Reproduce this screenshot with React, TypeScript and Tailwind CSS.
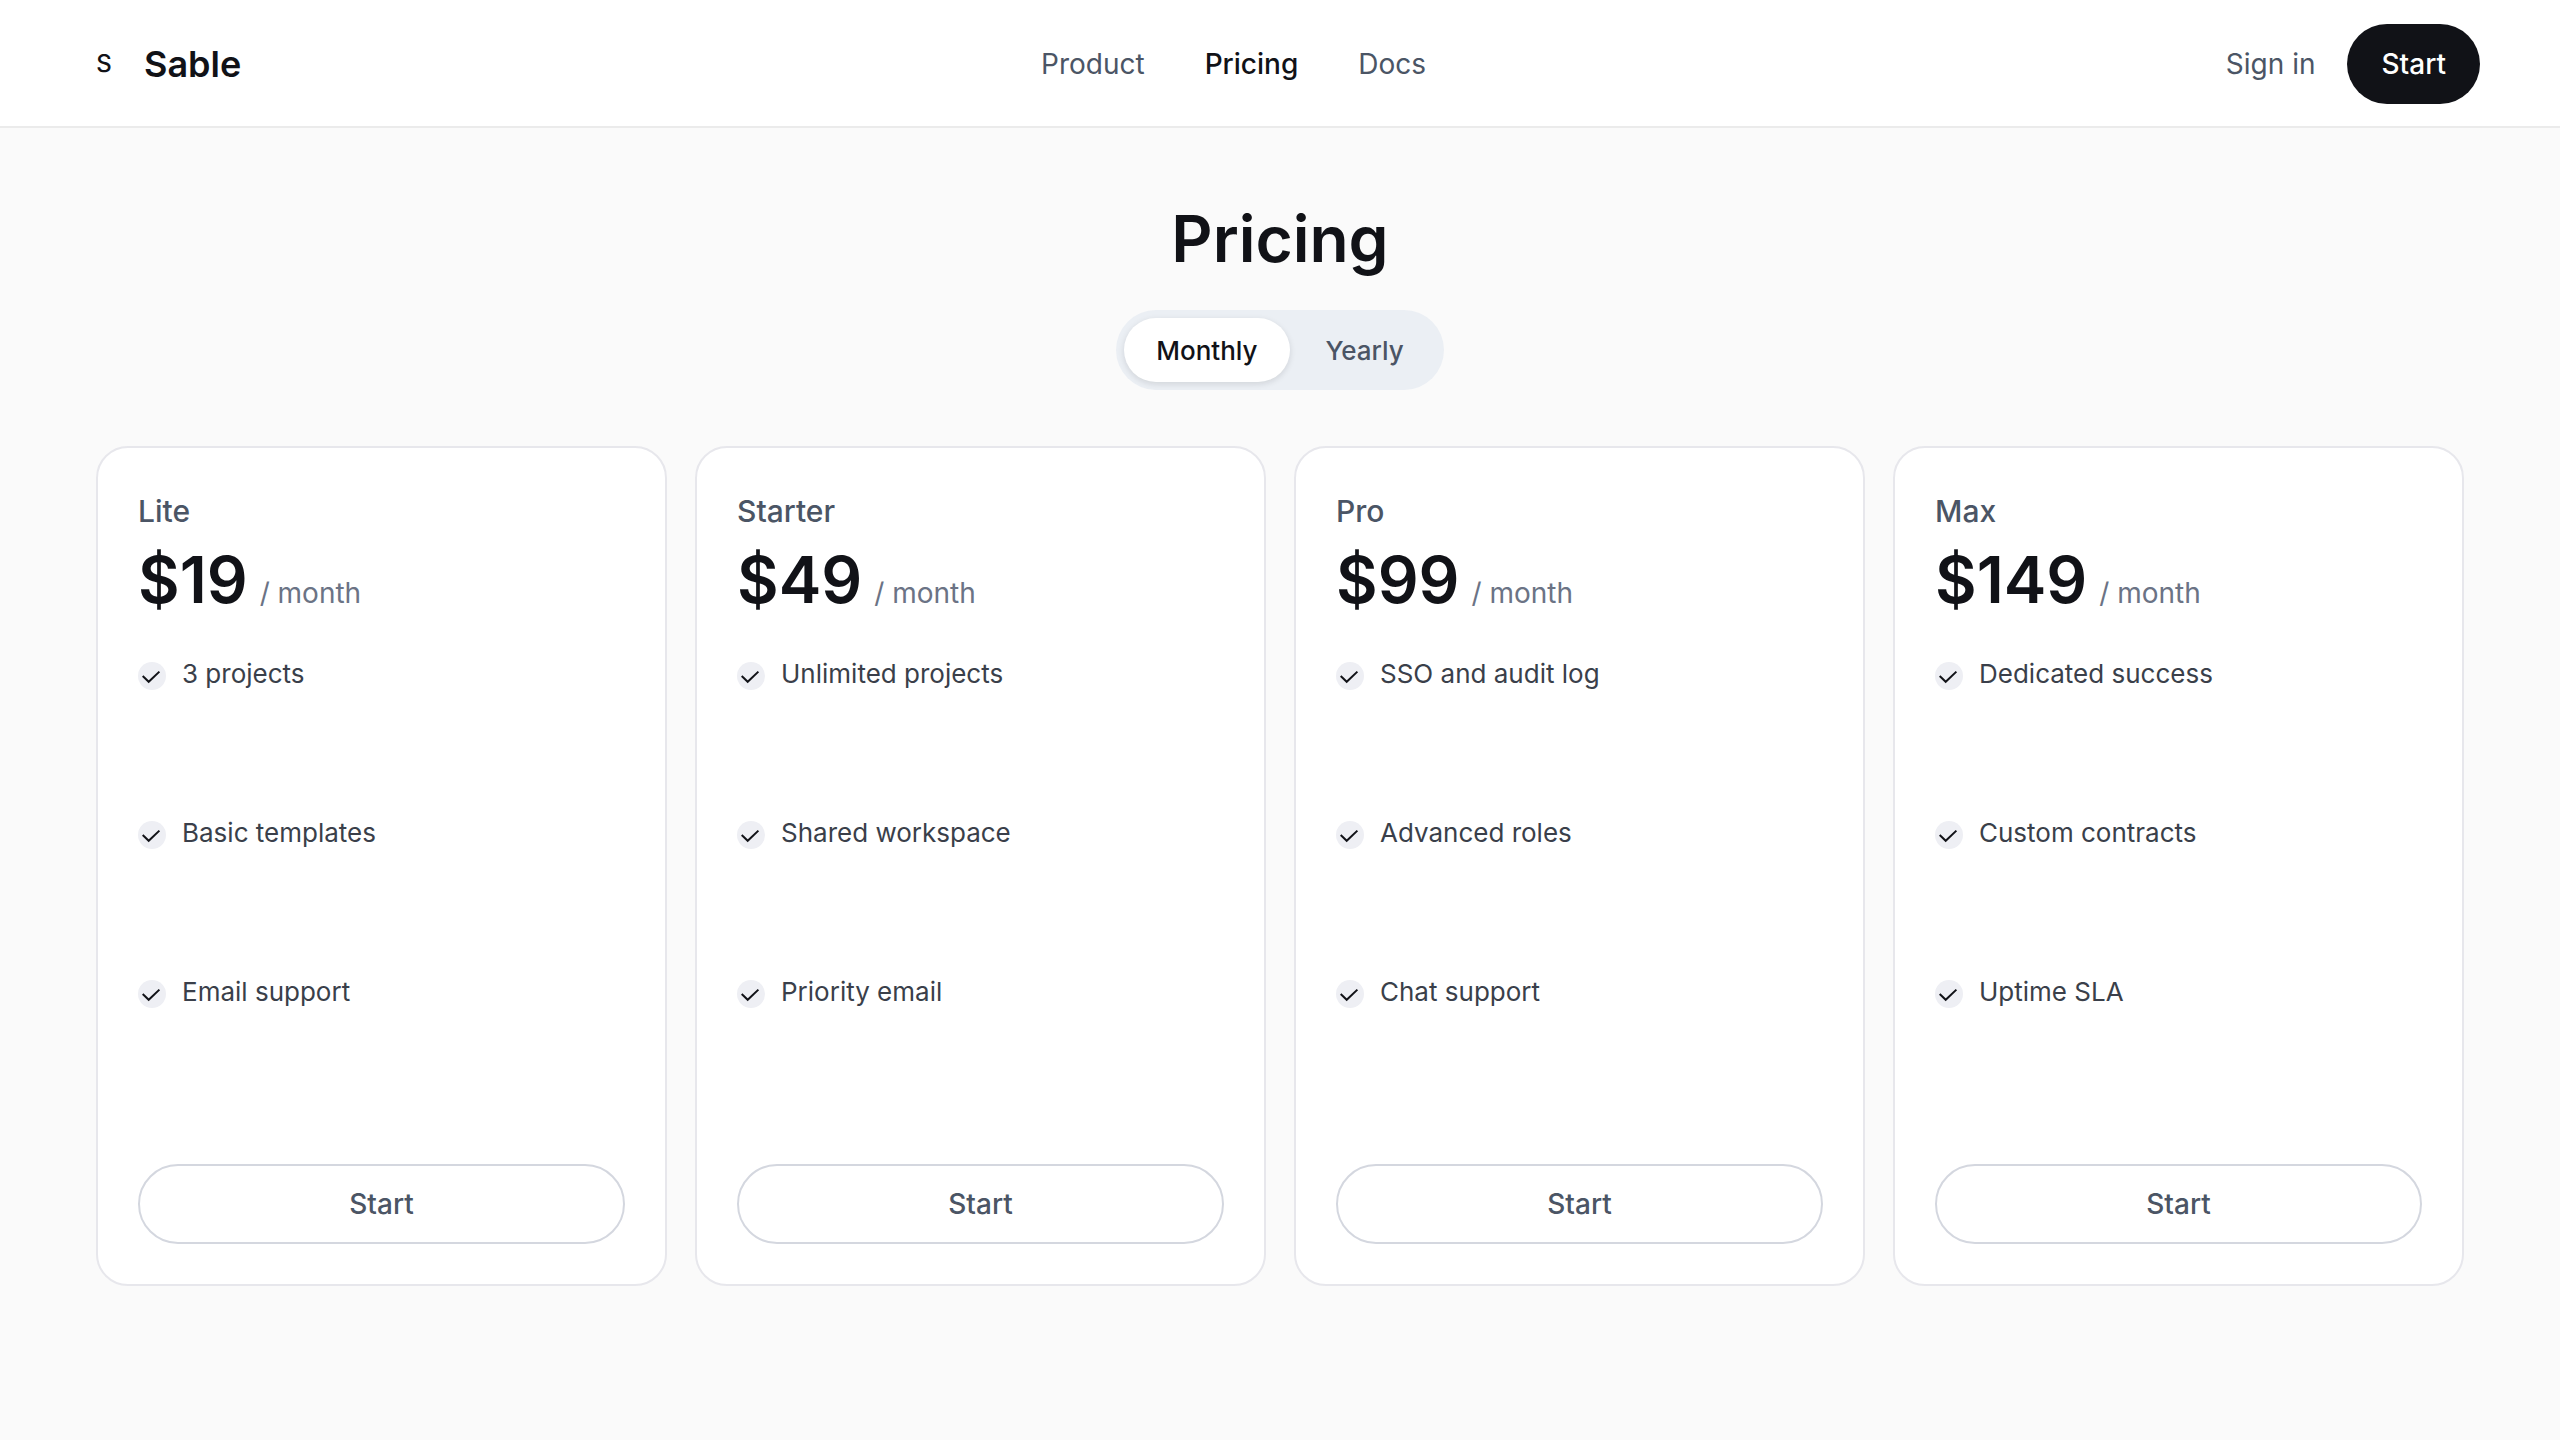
const navLinks = [
  { label: "Product", href: "#product", active: false },
  { label: "Pricing", href: "#pricing", active: true },
  { label: "Docs", href: "#docs", active: false },
];

const plans = [
  {
    name: "Lite",
    price: "$19",
    features: ["3 projects", "Basic templates", "Email support"],
  },
  {
    name: "Starter",
    price: "$49",
    features: ["Unlimited projects", "Shared workspace", "Priority email"],
  },
  {
    name: "Pro",
    price: "$99",
    features: ["SSO and audit log", "Advanced roles", "Chat support"],
  },
  {
    name: "Max",
    price: "$149",
    features: ["Dedicated success", "Custom contracts", "Uptime SLA"],
  },
];

function Header() {
  return (
    <header className="flex h-32 items-center justify-between bg-white px-20 shadow-[inset_0_-2px_0_#ebebeb]">
      <a href="#home" className="flex items-center">
        <span className="flex w-12 justify-center text-2xl font-medium">S</span>
        <span className="ml-4 text-4xl font-semibold">Sable</span>
      </a>

      <nav className="flex gap-15">
        {navLinks.map((link) => (
          <a
            key={link.label}
            href={link.href}
            className={
              link.active
                ? "text-[28px] font-medium text-[#111217]"
                : "text-[28px] text-[#4b5565]"
            }
          >
            {link.label}
          </a>
        ))}
      </nav>

      <div className="flex items-center gap-8">
        <a href="#sign-in" className="text-[28px] text-[#4b5565]">
          Sign in
        </a>
        <button className="h-20 rounded-full bg-[#111217] px-[34px] text-[28px] font-medium text-white">
          Start
        </button>
      </div>
    </header>
  );
}

function BillingToggle() {
  return (
    <div className="flex gap-1 rounded-full bg-[#ebeff4] p-2 text-[26px] font-medium">
      <button
        aria-pressed="true"
        className="h-16 rounded-full bg-white px-8 shadow-[0_2px_6px_rgba(17,18,23,0.12)]"
      >
        Monthly
      </button>
      <button aria-pressed="false" className="h-16 rounded-full px-8 text-[#4b5565]">
        Yearly
      </button>
    </div>
  );
}

function CheckBadge() {
  return (
    <span className="mt-1.5 h-7 w-7 flex-shrink-0 rounded-full bg-[#eeeff4]">
      <svg viewBox="0 0 28 28" className="h-7 w-7" fill="none" stroke="#111217" strokeWidth="2">
        <path d="M4.7 14 L10.7 19.8 L21.4 9.6" />
      </svg>
    </span>
  );
}

function PlanCard({ plan }: { plan: (typeof plans)[number] }) {
  return (
    <article className="flex flex-col rounded-[32px] border-2 border-[#e7e7ec] bg-white p-10">
      <h2 className="text-[30px] leading-[46px] font-medium text-[#4b5565]">{plan.name}</h2>
      <p className="mt-2.5 flex items-baseline gap-3">
        <span className="text-[64px] leading-[72px] font-semibold">{plan.price}</span>
        <span className="text-[28px] text-[#6b7385]">/ month</span>
      </p>
      <ul className="mt-10 flex-1 text-[26px] leading-9 text-[#3a3f4a]">
        {plan.features.map((feature) => (
          <li key={feature} className="flex h-[159px] items-start gap-4">
            <CheckBadge />
            {feature}
          </li>
        ))}
      </ul>
      <button className="mt-[31px] h-20 rounded-full border-2 border-[#d4d7df] text-[28px] font-medium text-[#4b5565]">
        Start
      </button>
    </article>
  );
}

export default function App() {
  return (
    <div className="min-h-screen bg-[#fafafa] font-['Inter',sans-serif] text-[#111217]">
      <Header />
      <main className="px-24 pt-16 pb-20">
        <div className="flex flex-col items-center">
          <h1 className="text-[64px] leading-[94px] font-semibold">Pricing</h1>
          <div className="mt-6">
            <BillingToggle />
          </div>
        </div>
        <div className="mt-14 grid grid-cols-4 gap-7">
          {plans.map((plan) => (
            <PlanCard key={plan.name} plan={plan} />
          ))}
        </div>
      </main>
    </div>
  );
}
